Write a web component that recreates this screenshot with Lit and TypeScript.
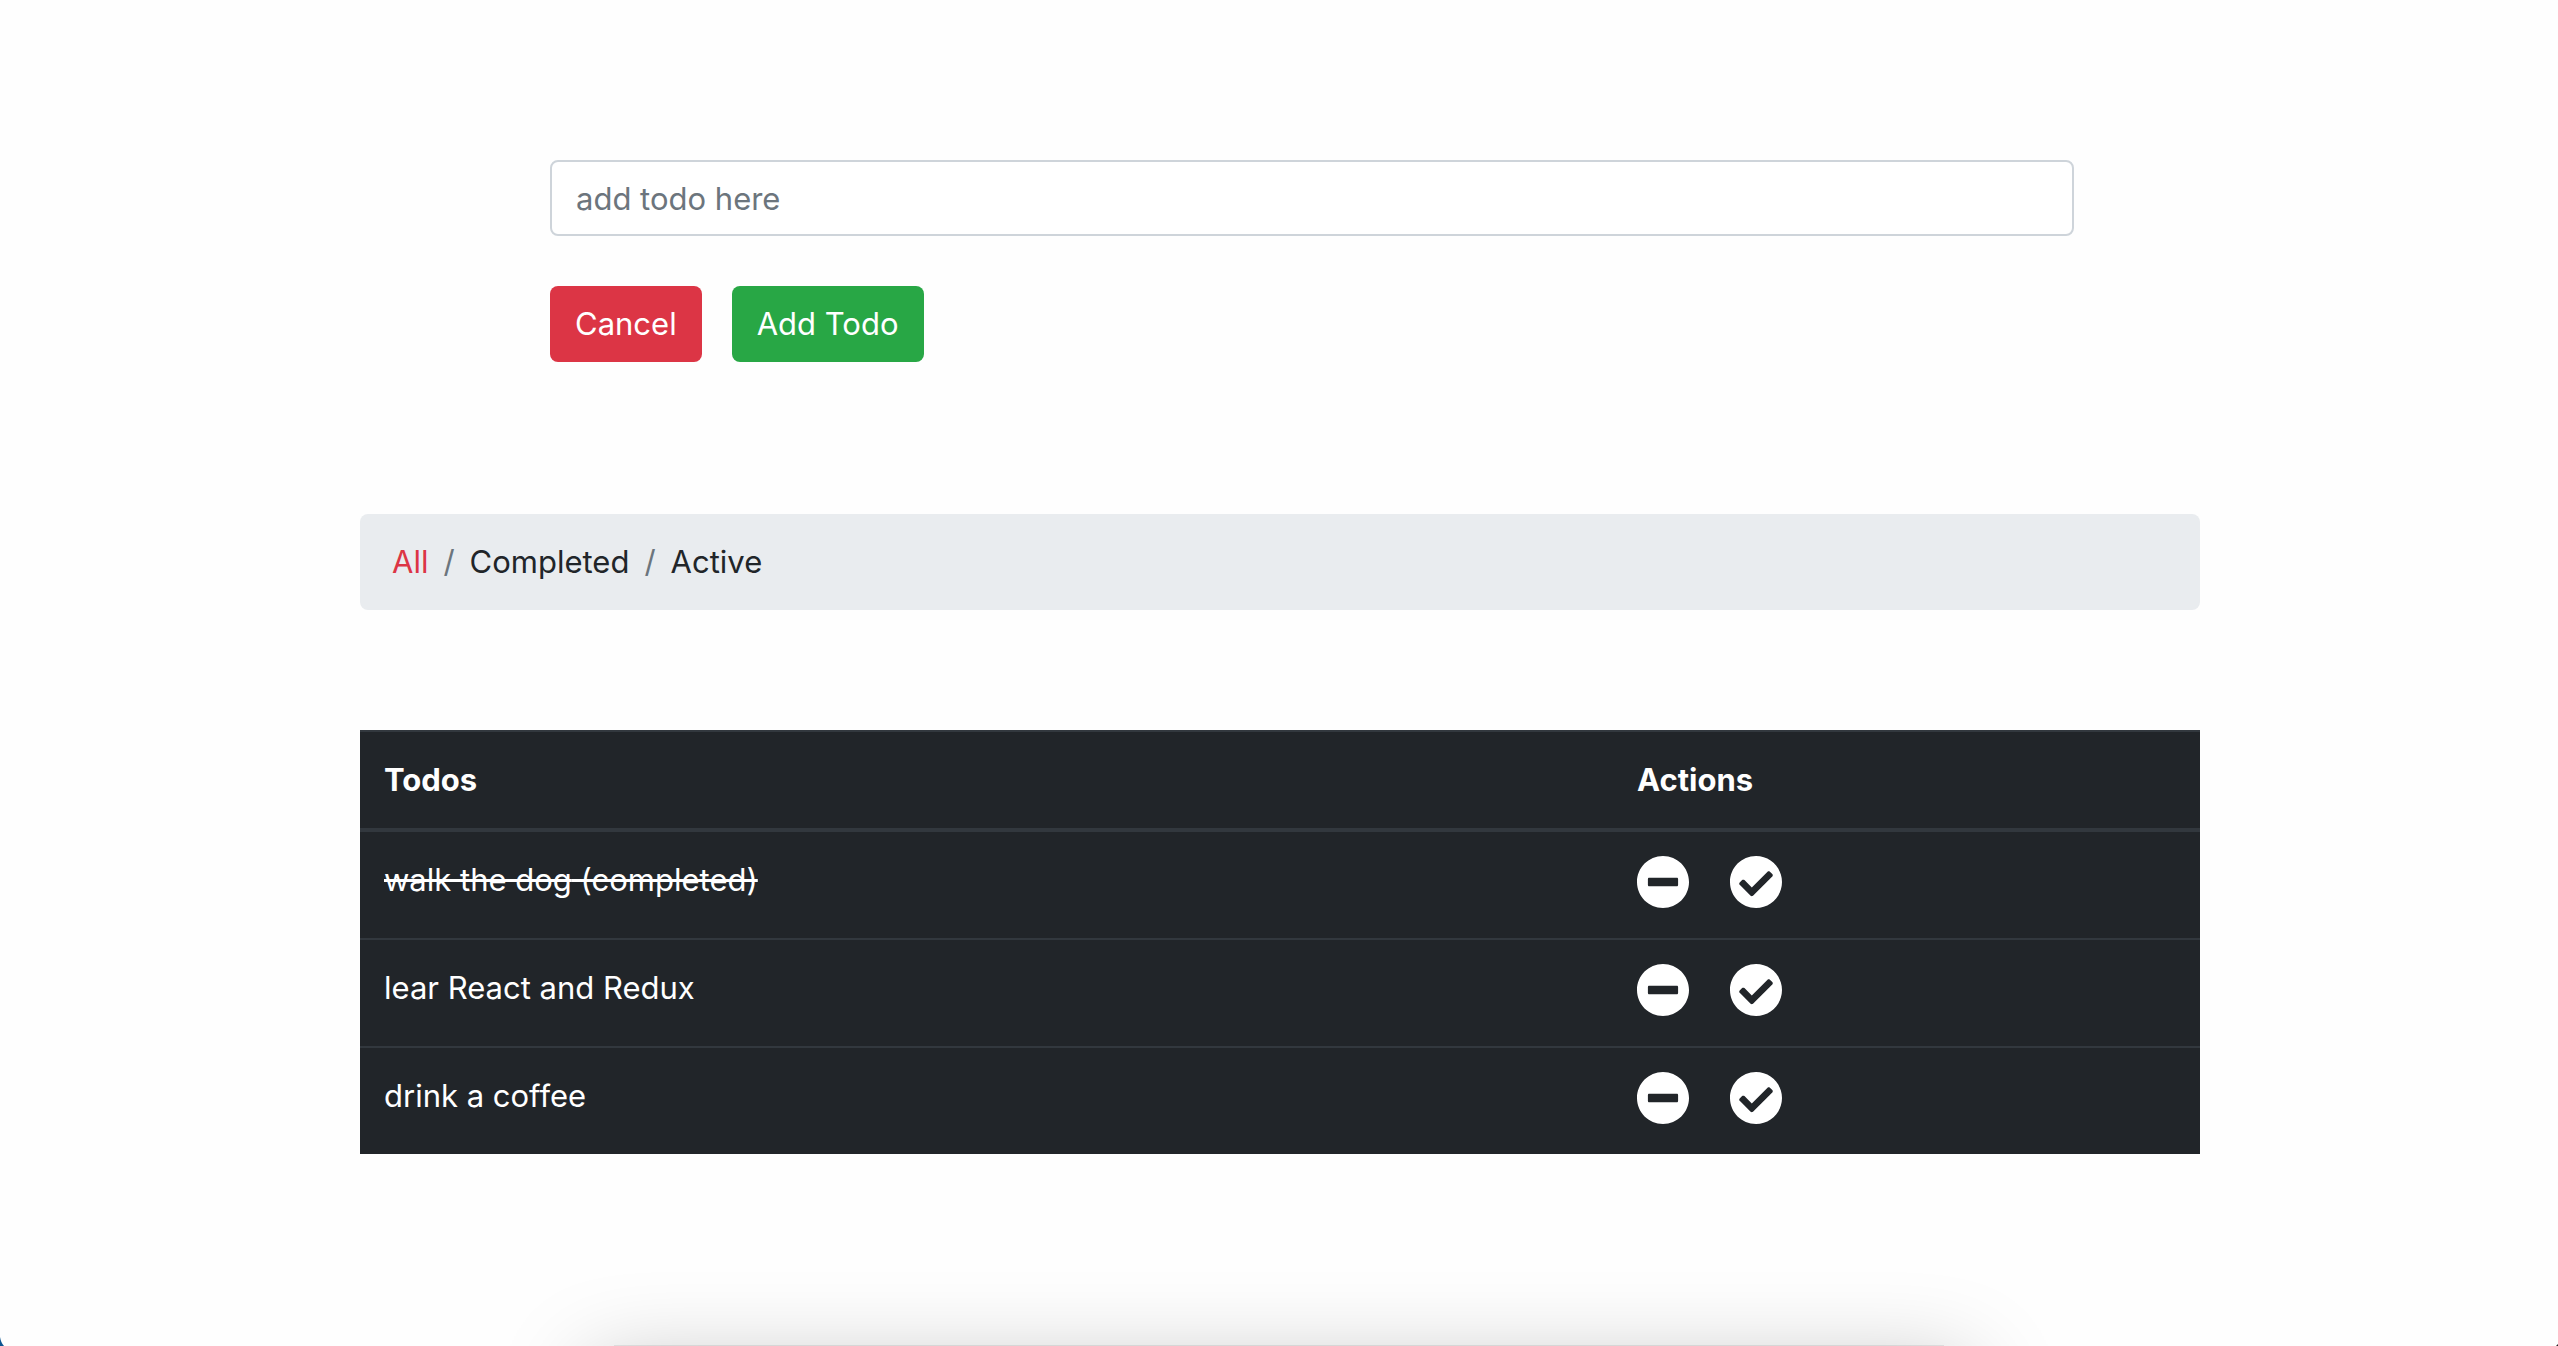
import { LitElement, html, css } from "lit";
import { customElement, property, state } from "lit/decorators.js";
import { classMap } from "lit/directives/class-map.js";

interface Todo {
  id: number;
  text: string;
  completed: boolean;
}

type Filter = "All" | "Completed" | "Active";

const FILTERS: Filter[] = ["All", "Completed", "Active"];

const minusCircle = html`<svg class="icon" viewBox="8 8 496 496" aria-hidden="true">
  <path fill="currentColor" d="M256 8C119 8 8 119 8 256s111 248 248 248 248-111 248-248S393 8 256 8zM124 296c-6.600 0-12-5.400-12-12v-56c0-6.600 5.400-12 12-12h264c6.600 0 12 5.400 12 12v56c0 6.600-5.400 12-12 12H124z" />
</svg>`;

const checkCircle = html`<svg class="icon" viewBox="8 8 496 496" aria-hidden="true">
  <path fill="currentColor" d="M504 256c0 136.967-111.033 248-248 248S8 392.967 8 256 119.033 8 256 8s248 111.033 248 248zM227.314 387.314l184-184c6.248-6.248 6.248-16.379 0-22.627l-22.627-22.627c-6.248-6.249-16.379-6.249-22.628 0L216 308.118l-70.059-70.059c-6.248-6.248-16.379-6.248-22.628 0l-22.627 22.627c-6.248 6.248-6.248 16.379 0 22.627l104 104c6.249 6.249 16.379 6.249 22.628.001z" />
</svg>`;

@customElement("todo-form")
export class TodoForm extends LitElement {
  static styles = css`
    :host {
      display: block;
    }
    .form {
      display: flex;
      flex-direction: column;
      gap: 50px;
      margin: 0;
    }
    .field {
      box-sizing: border-box;
      width: 100%;
      height: 76px;
      padding: 12px 24px;
      border: 2px solid #ced4da;
      border-radius: 8px;
      background: #fff;
      color: #495057;
      font: inherit;
    }
    .field::placeholder {
      color: #6c757d;
      opacity: 1;
    }
    .buttons {
      display: flex;
      gap: 30px;
    }
    .button {
      height: 76px;
      padding: 0 25px;
      border: 0;
      border-radius: 8px;
      color: #fff;
      font: inherit;
      cursor: pointer;
    }
    .danger {
      background: #dc3545;
    }
    .success {
      background: #28a745;
    }
  `;

  @state() private text = "";

  private submit(event: Event) {
    event.preventDefault();
    const text = this.text.trim();
    if (text) this.dispatchEvent(new CustomEvent("add-todo", { detail: text }));
    this.text = "";
  }

  render() {
    return html`
      <form class="form" @submit=${this.submit}>
        <input
          class="field"
          type="text"
          aria-label="Todo"
          placeholder="add todo here"
          .value=${this.text}
          @input=${(e: Event) => (this.text = (e.target as HTMLInputElement).value)}
        />
        <div class="buttons">
          <button class="button danger" type="button" @click=${() => (this.text = "")}>Cancel</button>
          <button class="button success" type="submit">Add Todo</button>
        </div>
      </form>
    `;
  }
}

@customElement("todo-filters")
export class TodoFilters extends LitElement {
  static styles = css`
    :host {
      display: block;
    }
    .list {
      display: flex;
      margin: 0;
      padding: 24px 32px;
      border-radius: 8px;
      background: #e9ecef;
      list-style: none;
    }
    .item + .item::before {
      content: "/";
      padding: 0 15px;
      color: #6c757d;
    }
    .link {
      color: #212529;
      text-decoration: none;
    }
    .selected {
      color: #dc3545;
    }
  `;

  @property() filter: Filter = "All";

  private select(event: Event, name: Filter) {
    event.preventDefault();
    this.dispatchEvent(new CustomEvent("filter-change", { detail: name }));
  }

  render() {
    return html`
      <nav aria-label="Filter">
        <ol class="list">
          ${FILTERS.map(
            (name) => html`<li class="item"><a
              class=${classMap({ link: true, selected: name === this.filter })}
              href="#"
              @click=${(e: Event) => this.select(e, name)}
            >${name}</a></li>`
          )}
        </ol>
      </nav>
    `;
  }
}

@customElement("todo-table")
export class TodoTable extends LitElement {
  static styles = css`
    :host {
      display: block;
    }
    .table {
      width: 100%;
      table-layout: fixed;
      border-spacing: 0;
      background: #212529;
      color: #fff;
    }
    .head {
      box-sizing: border-box;
      padding: 24px;
      border-top: 2px solid #32383e;
      border-bottom: 4px solid #32383e;
      font-weight: 700;
      text-align: left;
    }
    .actions-head {
      width: 587px;
    }
    .cell {
      padding: 24px 24px 30px;
      vertical-align: top;
    }
    .row + .row .cell {
      border-top: 2px solid #32383e;
    }
    .done {
      text-decoration: line-through;
    }
    .actions {
      display: flex;
      gap: 41px;
    }
    .action {
      display: block;
      padding: 0;
      border: 0;
      background: none;
      color: #fff;
      cursor: pointer;
    }
    .icon {
      display: block;
      width: 52px;
      height: 52px;
    }
  `;

  @property({ attribute: false }) todos: Todo[] = [];

  private send(name: string, id: number) {
    this.dispatchEvent(new CustomEvent(name, { detail: id }));
  }

  render() {
    return html`
      <table class="table">
        <thead>
          <tr>
            <th class="head" scope="col">Todos</th>
            <th class="head actions-head" scope="col">Actions</th>
          </tr>
        </thead>
        <tbody>
          ${this.todos.map(
            (todo) => html`
              <tr class="row">
                <td class=${classMap({ cell: true, done: todo.completed })}>${todo.text}${todo.completed ? " (completed)" : ""}</td>
                <td class="cell">
                  <div class="actions">
                    <button class="action" type="button" aria-label="Delete" @click=${() => this.send("delete-todo", todo.id)}>${minusCircle}</button>
                    <button class="action" type="button" aria-label="Toggle completed" @click=${() => this.send("toggle-todo", todo.id)}>${checkCircle}</button>
                  </div>
                </td>
              </tr>
            `
          )}
        </tbody>
      </table>
    `;
  }
}

@customElement("app-root")
export class AppRoot extends LitElement {
  static styles = css`
    :host {
      display: block;
      position: relative;
      box-sizing: border-box;
      min-height: 100vh;
      padding: 160px 24px 96px 26px;
      overflow: hidden;
      background: #fefefe;
      font-family: Inter, "Liberation Sans", sans-serif;
      font-size: 31px;
      line-height: 48px;
    }
    .container {
      display: flex;
      flex-direction: column;
      max-width: 1840px;
      margin: 0 auto;
    }
    .form {
      padding: 0 126px 0 190px;
    }
    .filters {
      margin-top: 152px;
    }
    .table {
      margin-top: 120px;
    }
    .shade {
      position: absolute;
      top: 100%;
      left: 24%;
      right: 24%;
      height: 120px;
      box-shadow: 0 -1px 0 rgba(0, 0, 0, 0.08), 0 44px 90px 24px rgba(0, 0, 0, 0.25);
    }
    .corner {
      position: absolute;
      bottom: 0;
      left: 0;
      width: 4px;
      height: 9px;
      color: #0d5590;
    }
    .corner-end {
      left: auto;
      right: 0;
      width: 2px;
      height: 2px;
      color: #222;
    }
  `;

  @state() private filter: Filter = "All";
  @state() private todos: Todo[] = [
    { id: 1, text: "walk the dog", completed: true },
    { id: 2, text: "lear React and Redux", completed: false },
    { id: 3, text: "drink a coffee", completed: false },
  ];

  private get visible() {
    if (this.filter === "All") return this.todos;
    return this.todos.filter((t) => t.completed === (this.filter === "Completed"));
  }

  private add(event: CustomEvent<string>) {
    this.todos = [...this.todos, { id: Date.now(), text: event.detail, completed: false }];
  }

  private remove(event: CustomEvent<number>) {
    this.todos = this.todos.filter((t) => t.id !== event.detail);
  }

  private toggle(event: CustomEvent<number>) {
    this.todos = this.todos.map((t) => (t.id === event.detail ? { ...t, completed: !t.completed } : t));
  }

  render() {
    return html`
      <main class="container">
        <todo-form class="form" @add-todo=${this.add}></todo-form>
        <todo-filters
          class="filters"
          .filter=${this.filter}
          @filter-change=${(e: CustomEvent<Filter>) => (this.filter = e.detail)}
        ></todo-filters>
        <todo-table class="table" .todos=${this.visible} @delete-todo=${this.remove} @toggle-todo=${this.toggle}></todo-table>
      </main>
      <div class="shade"></div>
      <svg class="corner" viewBox="0 0 4 9" aria-hidden="true"><path fill="currentColor" d="M0 0Q1 6 4 9H0z" /></svg>
      <svg class="corner corner-end" viewBox="0 0 2 2" aria-hidden="true"><path fill="currentColor" d="M2 0V2H0z" /></svg>
    `;
  }
}
